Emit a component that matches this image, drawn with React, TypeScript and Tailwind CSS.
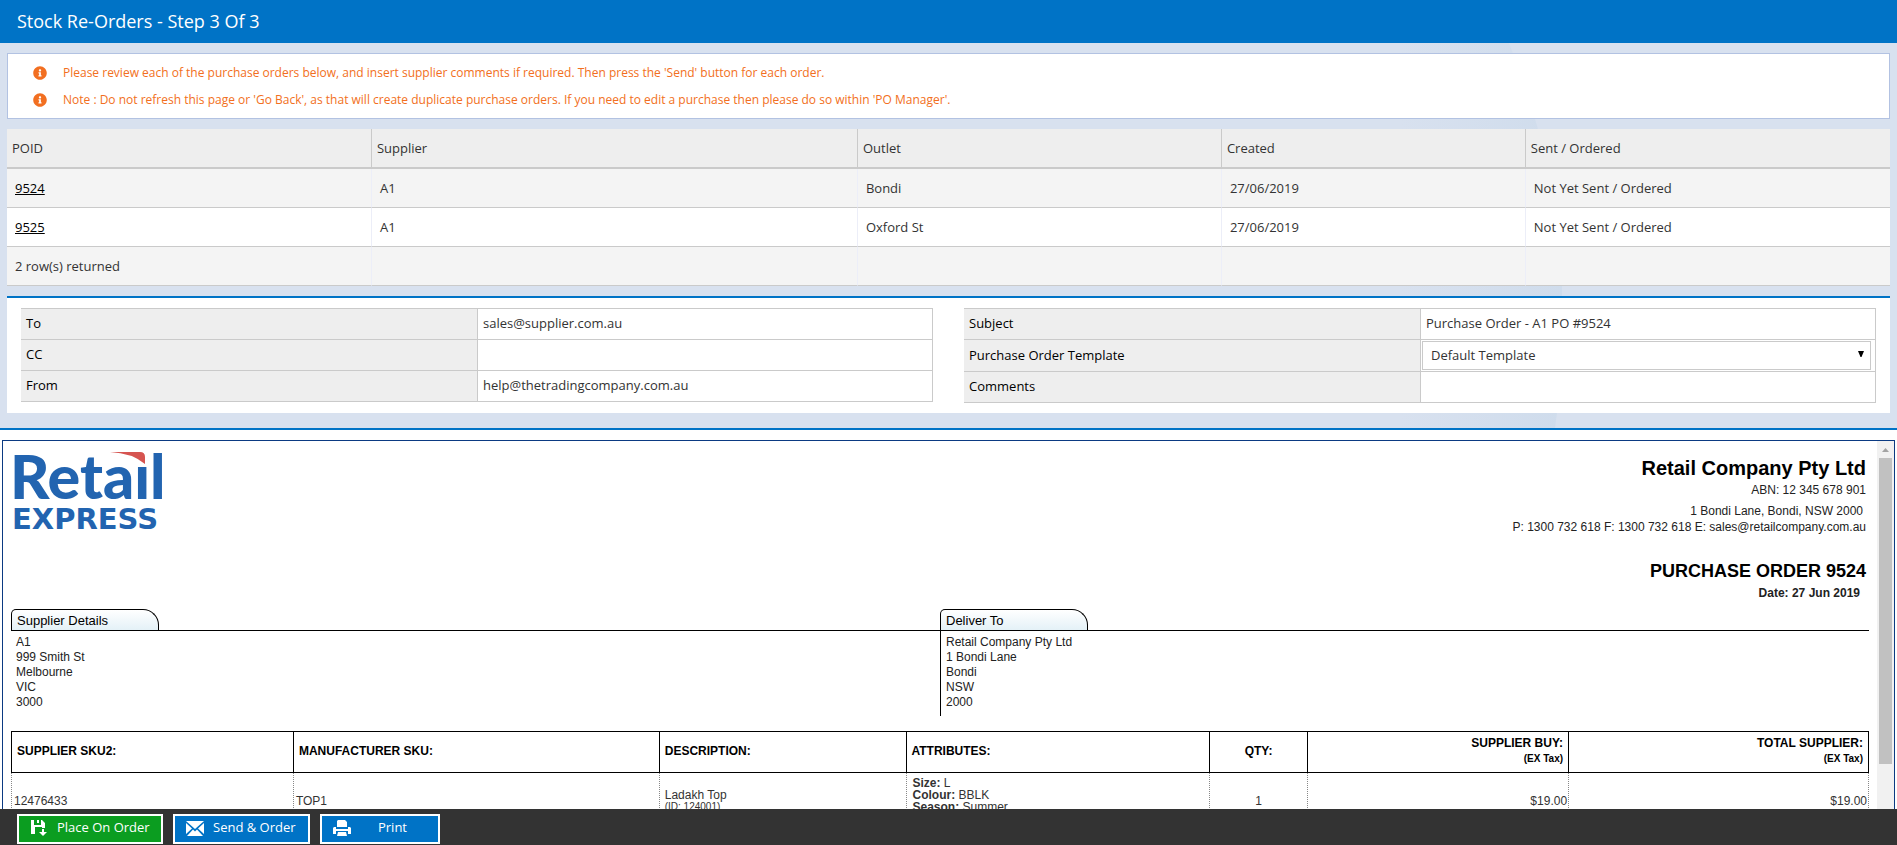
import { FaInfoCircle } from "react-icons/fa";
import clsx from "clsx";

const notices = [
  "Please review each of the purchase orders below, and insert supplier comments if required. Then press the 'Send' button for each order.",
  "Note : Do not refresh this page or 'Go Back', as that will create duplicate purchase orders. If you need to edit a purchase then please do so within 'PO Manager'.",
];

const orders = [
  { id: "9524", supplier: "A1", outlet: "Bondi", created: "27/06/2019", status: "Not Yet Sent / Ordered" },
  { id: "9525", supplier: "A1", outlet: "Oxford St", created: "27/06/2019", status: "Not Yet Sent / Ordered" },
];

const supplierAddress = ["A1", "999 Smith St", "Melbourne", "VIC", "3000"];
const deliverAddress = ["Retail Company Pty Ltd", "1 Bondi Lane", "Bondi", "NSW", "2000"];

function Notices() {
  return (
    <ul className="border border-[#b2c2e2] bg-white py-[5px] text-[12px] text-[#f26f21]">
      {notices.map((n) => (
        <li key={n} className="flex h-[27px] items-center gap-4 pl-[25px]">
          <FaInfoCircle className="size-[14px] shrink-0" />
          <span>{n}</span>
        </li>
      ))}
    </ul>
  );
}

function OrdersTable() {
  const th = "border-b-2 border-[#cacaca] bg-[#eee] pt-[2px] pl-[5px] text-left font-normal not-last:border-r";
  const td = "border-b border-b-[#cacaca] pt-px pl-2 not-last:border-r not-last:border-r-[#eceef8]";
  return (
    <table className="w-full table-fixed border-separate border-spacing-0 text-[13px] text-[#333]">
      <colgroup>
        <col className="w-[19.38%]" />
        <col className="w-[25.81%]" />
        <col className="w-[19.33%]" />
        <col className="w-[16.14%]" />
        <col />
      </colgroup>
      <thead>
        <tr className="h-10">
          <th className={th}>POID</th>
          <th className={th}>Supplier</th>
          <th className={th}>Outlet</th>
          <th className={th}>Created</th>
          <th className={th}>Sent / Ordered</th>
        </tr>
      </thead>
      <tbody>
        {orders.map((o) => (
          <tr key={o.id} className="h-[39px] odd:bg-[#f4f4f4] even:bg-white">
            <td className={td}>
              <a href={`#${o.id}`} className="text-black underline">
                {o.id}
              </a>
            </td>
            <td className={td}>{o.supplier}</td>
            <td className={td}>{o.outlet}</td>
            <td className={td}>{o.created}</td>
            <td className={td}>{o.status}</td>
          </tr>
        ))}
        <tr className="h-[39px] bg-[#f4f4f4]">
          <td className={td}>2 row(s) returned</td>
          <td className={td} />
          <td className={td} />
          <td className={td} />
          <td className={td} />
        </tr>
      </tbody>
    </table>
  );
}

function Field({ id, label, value, options }: { id: string; label: string; value?: string; options?: string[] }) {
  return (
    <div className={clsx("flex border-b border-[#cacaca]", options ? "h-8" : "h-[31px]")}>
      <label htmlFor={id} className="flex w-1/2 items-center bg-[#eee] pl-[5px] text-black">
        {label}
      </label>
      <div className="flex w-1/2 border-x border-[#cacaca]">
        {options ? (
          <div className="relative my-px mr-1 ml-px flex flex-1">
            <select id={id} className="flex-1 appearance-none border border-[#cacaca] bg-white pl-2 text-[#333]">
              {options.map((o) => (
                <option key={o}>{o}</option>
              ))}
            </select>
            <svg viewBox="0 0 6 6" className="pointer-events-none absolute top-[10px] right-[7px] size-[6px]">
              <path d="M0 0h6L3.5 6h-1z" fill="#000" />
            </svg>
          </div>
        ) : (
          <input id={id} defaultValue={value} className="w-full bg-transparent pl-[5px] text-[#333] outline-none" />
        )}
      </div>
    </div>
  );
}

function EmailForm() {
  return (
    <form className="grid grid-cols-2 gap-[31px] border-t-2 border-[#0073c6] bg-white px-[14px] py-[10px] text-[13px]">
      <div className="self-start border-t border-[#cacaca]">
        <Field id="to" label="To" value="sales@supplier.com.au" />
        <Field id="cc" label="CC" />
        <Field id="from" label="From" value="help@thetradingcompany.com.au" />
      </div>
      <div className="self-start border-t border-[#cacaca]">
        <Field id="subject" label="Subject" value="Purchase Order - A1 PO #9524" />
        <Field id="template" label="Purchase Order Template" options={["Default Template"]} />
        <Field id="comments" label="Comments" />
      </div>
    </form>
  );
}

function Logo() {
  return (
    <svg width="160" height="86" viewBox="0 0 160 86" role="img" aria-label="Retail Express" className="overflow-visible">
      <text x="-4" y="48" fill="#2264b0" className="font-[Lato] text-[61px] font-black">
        Retail
      </text>
      <path d="M112 -2h25v18h-25z" fill="#fff" />
      <path d="M96 1h30q5 0 5 5v7Q118 2 96 1z" fill="#d65450" />
      <text x="-2" y="78" fill="#2264b0" className="font-['DejaVu_Sans'] text-[29px] font-bold">
        EXPRESS
      </text>
    </svg>
  );
}

function Address({ title, lines, divider }: { title: string; lines: string[]; divider?: boolean }) {
  return (
    <section className="flex w-1/2 flex-col">
      <div className="border-b border-black">
        <h2 className="h-[21px] w-[148px] rounded-tl-[5px] rounded-tr-[16px] border border-b-0 border-black bg-linear-to-b from-white to-[#e4f1f7] pl-[5px] text-[13px] leading-[22px] text-black">
          {title}
        </h2>
      </div>
      <ul
        className={clsx(
          "h-[85px] border-l pt-1 text-[12px] leading-[15px]",
          divider ? "border-black pl-[5px]" : "border-transparent pl-1",
        )}
      >
        {lines.map((l) => (
          <li key={l}>{l}</li>
        ))}
      </ul>
    </section>
  );
}

function ItemsTable() {
  const th = "border border-black px-[5px] pb-[2px] font-bold text-black";
  const td = "border-x border-dotted border-[#888]";
  return (
    <table className="mt-[15px] w-full table-fixed border-collapse text-[12px] leading-[12px] text-[#333]">
      <colgroup>
        <col className="w-[15.18%]" />
        <col className="w-[19.7%]" />
        <col className="w-[13.29%]" />
        <col className="w-[16.35%]" />
        <col className="w-[5.27%]" />
        <col className="w-[14.06%]" />
        <col />
      </colgroup>
      <thead>
        <tr className="h-[41px]">
          <th className={clsx(th, "text-left")}>SUPPLIER SKU2:</th>
          <th className={clsx(th, "text-left")}>MANUFACTURER SKU:</th>
          <th className={clsx(th, "text-left")}>DESCRIPTION:</th>
          <th className={clsx(th, "text-left")}>ATTRIBUTES:</th>
          <th className={clsx(th, "text-center")}>QTY:</th>
          <th className={clsx(th, "text-right")}>
            SUPPLIER BUY:
            <span className="block pt-1 text-[10px]">(EX Tax)</span>
          </th>
          <th className={clsx(th, "text-right")}>
            TOTAL SUPPLIER:
            <span className="block pt-1 text-[10px]">(EX Tax)</span>
          </th>
        </tr>
      </thead>
      <tbody>
        <tr className="h-[57px]">
          <td className={clsx(td, "px-[2px]")}>12476433</td>
          <td className={clsx(td, "px-[2px]")}>TOP1</td>
          <td className={clsx(td, "px-[5px]")}>
            Ladakh Top
            <span className="block text-[10px]">(ID: 124001)</span>
          </td>
          <td className={clsx(td, "px-[6px] pb-3")}>
            <b>Size:</b> L<br />
            <b>Colour:</b> BBLK
            <br />
            <b>Season:</b> Summer
          </td>
          <td className={clsx(td, "px-[2px] text-center")}>1</td>
          <td className={clsx(td, "px-px text-right")}>$19.00</td>
          <td className={clsx(td, "px-px text-right")}>$19.00</td>
        </tr>
      </tbody>
    </table>
  );
}

function PurchaseOrder() {
  return (
    <div className="mx-[2px] mt-[10px] flex min-h-0 flex-1 overflow-hidden border border-b-0 border-[#0b3a82] bg-white font-['Liberation_Sans',Arial,sans-serif] text-[#222]">
      <article className="min-w-0 flex-1 pt-[10px] pr-2 pl-2">
        <header className="flex h-[158px] items-start justify-between">
          <div className="pl-[3px]">
            <Logo />
          </div>
          <div className="pt-[5px] pr-[3px] text-right text-[12px] leading-4">
            <h1 className="text-[20px] leading-6 font-bold text-black">Retail Company Pty Ltd</h1>
            <p className="pt-[2px]">ABN: 12 345 678 901</p>
            <p className="pt-[5px] pr-[3px]">1 Bondi Lane, Bondi, NSW 2000</p>
            <p>P: 1300 732 618 F: 1300 732 618 E: sales@retailcompany.com.au</p>
            <p className="pt-[26px] text-[18px] leading-5 font-bold text-black">PURCHASE ORDER 9524</p>
            <p className="pt-1 pr-[6px] font-bold">Date: 27 Jun 2019</p>
          </div>
        </header>
        <div className="flex">
          <Address title="Supplier Details" lines={supplierAddress} />
          <Address title="Deliver To" lines={deliverAddress} divider />
        </div>
        <ItemsTable />
      </article>
      <div className="flex w-[17px] flex-col items-center bg-[#f1f1f1]">
        <svg viewBox="0 0 17 17" className="size-[17px] shrink-0" fill="#a3a3a3">
          <path d="M5 11l3.500-4 3.500 4z" />
        </svg>
        <div className="h-[306px] w-[13px] bg-[#c1c1c1]" />
      </div>
    </div>
  );
}

function SaveIcon() {
  return (
    <svg width="18" height="18" viewBox="0 0 18 18" fill="#fff">
      <path d="M1 1h3v5h7V1h1l3 3v5h-3V8H5v7H1z" />
      <path d="M7 1h2v3H7zM12 10h2v3h3l-4 4-4-4h3z" />
    </svg>
  );
}

function MailIcon() {
  return (
    <svg width="18" height="15" viewBox="0 0 18 15" fill="#fff">
      <path d="M0 0h18L9 8zM0 2l6 5.500L0 13zM18 2v11l-6-5.500zM7 8.500l2 2 2-2 6 6.500H1z" />
    </svg>
  );
}

function PrintIcon() {
  return (
    <svg width="18" height="17" viewBox="0 0 18 17" fill="#fff">
      <path d="M5 0h7l2 2v5H4V1zM1 7h2v2h12V7h2l1 1v6h-3v-3H3v3H0V8z" />
      <path d="M5 12h8l1 4H4z" />
    </svg>
  );
}

function Footer() {
  const button = "flex h-[30px] items-center border-2 border-white pb-[2px] text-white";
  return (
    <footer className="flex shrink-0 gap-[10px] bg-[#333] px-[17px] pt-[5px] pb-px text-[13px]">
      <button type="button" className={clsx(button, "w-[146px] gap-[9px] bg-[#0b9d20] pl-[11px]")}>
        <SaveIcon />
        Place On Order
      </button>
      <button type="button" className={clsx(button, "w-[137px] gap-[9px] bg-[#0073c6] pl-[11px]")}>
        <MailIcon />
        Send &amp; Order
      </button>
      <button type="button" className={clsx(button, "w-[120px] bg-[#0073c6] pr-1 pl-[11px]")}>
        <PrintIcon />
        <span className="flex-1">Print</span>
      </button>
    </footer>
  );
}

export default function App() {
  return (
    <div className="flex h-screen flex-col overflow-hidden bg-white font-['Open_Sans',sans-serif]">
      <header className="flex h-[43px] shrink-0 items-center bg-[#0073c6] pl-[17px] text-[18px] text-white">
        Stock Re-Orders - Step 3 Of 3
      </header>
      <main className="flex min-h-0 flex-1 flex-col">
        <div className="relative shrink-0 border-b-2 border-[#0073c6] bg-[#d8e1ef] px-[7px] pt-[10px] pb-[15px]">
          <svg
            viewBox="0 0 162 385"
            preserveAspectRatio="none"
            className="absolute top-0 right-[335px] h-full w-[162px]"
          >
            <defs>
              <linearGradient id="sweep">
                <stop offset="0" stopColor="#cfdcec" stopOpacity="0" />
                <stop offset="1" stopColor="#cfdcec" />
              </linearGradient>
            </defs>
            <path d="M0 0h109Q185 190 155 385H0z" fill="url(#sweep)" />
          </svg>
          <div className="relative flex flex-col gap-[10px]">
            <Notices />
            <OrdersTable />
            <EmailForm />
          </div>
        </div>
        <PurchaseOrder />
      </main>
      <Footer />
    </div>
  );
}
